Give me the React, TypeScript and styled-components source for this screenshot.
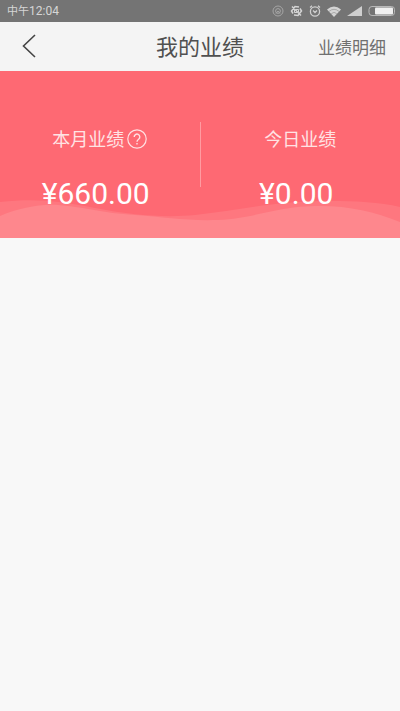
import React from 'react';
import styled, { createGlobalStyle } from 'styled-components';

const GlobalStyle = createGlobalStyle`
  * { box-sizing: border-box; }
  body {
    margin: 0;
    background: #f8f8f8;
    font-family: Roboto, "Noto Sans CJK SC", sans-serif;
  }
`;

const Page = styled.div`
  display: flex;
  flex-direction: column;
  min-height: 100vh;
`;

const StatusBar = styled.div`
  display: flex;
  align-items: center;
  justify-content: space-between;
  height: 22px;
  padding: 0 5px 0 7px;
  background: #747474;
  color: #d6d6d6;
`;

const Clock = styled.time`
  font-size: 12px;
  line-height: 22px;
`;

const Meridiem = styled.span`
  font-size: 11px;
`;

const StatusIcons = styled.div`
  display: flex;
  align-items: center;
  gap: 6px;

  svg { display: block; }
`;

const Header = styled.header`
  display: grid;
  grid-template-columns: 1fr auto 1fr;
  align-items: center;
  height: 49px;
  padding: 0 14px;
  background: #f4f4f4;
`;

const BackButton = styled.button`
  display: flex;
  justify-self: start;
  padding: 0 6px 2px;
  border: 0;
  background: none;
  cursor: pointer;
`;

const Title = styled.h1`
  margin: 0;
  padding-top: 2px;
  color: #505050;
  font-size: 22px;
  font-weight: 400;
  line-height: 32px;
`;

const DetailLink = styled.a`
  justify-self: end;
  padding-top: 2px;
  color: #707070;
  font-size: 17px;
  line-height: 24px;
  text-decoration: none;
  white-space: nowrap;
`;

const Summary = styled.section`
  position: relative;
  display: grid;
  grid-template-columns: 1fr 1px 1fr;
  align-items: start;
  padding: 51px 0 26px;
  background: #fe6973;
  color: #fff;
`;

const Waves = styled.svg`
  position: absolute;
  left: 0;
  bottom: 0;
  width: 100%;
  height: 40px;
`;

const Divider = styled.div`
  height: 65px;
  background: #ff9ba1;
`;

const Metric = styled.div`
  position: relative;
  display: flex;
  flex-direction: column;
  align-items: center;
  gap: 22px;
  padding-top: 4px;
`;

const MetricLabel = styled.div`
  display: flex;
  align-items: center;
  gap: 3px;
  color: #ffe3e4;
  font-size: 18px;
  line-height: 28px;
`;

const HelpButton = styled.button`
  display: flex;
  padding: 0 0 2px;
  border: 0;
  background: none;
  cursor: pointer;
`;

const Amount = styled.strong`
  padding-right: 8px;
  font-size: 30px;
  font-weight: 400;
  line-height: 36px;
`;

function StatusGlyphs() {
  return (
    <StatusIcons aria-hidden="true">
      <svg width="12" height="12" viewBox="0 0 12 12" fill="none" stroke="#a6a6a6">
        <circle cx="6" cy="6" r="5" />
        <circle cx="6" cy="6" r="2.4" />
        <path d="M4 8.5 6 6l2 2.5" />
      </svg>
      <svg width="13" height="12" viewBox="0 0 13 12" fill="none" stroke="#d4d4d4" strokeWidth="1.5">
        <path d="M3 8.500 1.500 6 5 1.500 9 2M10 3.500 11.500 6 8 10.500 4 10M2 1.500l9 9" />
        <path d="M4.500 5v2.500H7M6 4.500h2.500V7" strokeWidth="1" />
      </svg>
      <svg width="12" height="12" viewBox="0 0 12 12" fill="none" stroke="#d0d0d0" strokeWidth="1.3">
        <circle cx="6" cy="6.5" r="4.6" />
        <path d="M1 2.500 3 .8M11 2.500 9 .8M4 5.500l2 2 2-2" />
      </svg>
      <svg width="14" height="11" viewBox="0 0 14 11">
        <path d="M0 3.600Q7-2.600 14 3.600L7 11Z" fill="#d4d4d4" />
        <path d="M2 5.400Q7 1.200 12 5.400M4.300 7.600Q7 5.200 9.700 7.600" fill="none" stroke="#8b8b8b" strokeWidth=".6" />
      </svg>
      <svg width="15" height="10" viewBox="0 0 15 10">
        <path d="M0 10 15 0v10Z" fill="#cfcfcf" />
      </svg>
      <svg width="27" height="10" viewBox="0 0 27 10">
        <rect x="1" y=".5" width="25.5" height="9" rx="3" fill="none" stroke="#b8b8b8" />
        <rect x="7" y="1.5" width="18" height="7" rx="1" fill="#f0f0f0" />
      </svg>
    </StatusIcons>
  );
}

export default function App() {
  return (
    <Page>
      <GlobalStyle />
      <StatusBar>
        <Clock dateTime="12:04"><Meridiem>中午</Meridiem>12:04</Clock>
        <StatusGlyphs />
      </StatusBar>
      <Header>
        <BackButton type="button" aria-label="返回">
          <svg width="18" height="24" viewBox="0 0 18 24" fill="none" stroke="#444" strokeWidth="1.6">
            <path d="M15 1 3.5 12 15 23" />
          </svg>
        </BackButton>
        <Title>我的业绩</Title>
        <DetailLink href="#details">业绩明细</DetailLink>
      </Header>
      <main>
        <Summary>
          <Waves viewBox="0 0 400 40" preserveAspectRatio="none" aria-hidden="true">
            <path d="M0 4C35 0 60 3 95 10C130 17 165 20 195 17C240 12 275 3 330 3C355 3 380 4 400 9V40H0Z" fill="#fe777f" />
            <path d="M0 18C20 10 38 6 58 7C85 9 102 15 135 17C165 19 185 23 218 22C258 20 275 8 320 8C350 8 375 14 400 24V40H0Z" fill="#fe878d" />
          </Waves>
          <Metric>
            <MetricLabel>
              <span>本月业绩</span>
              <HelpButton type="button" aria-label="业绩说明">
                <svg width="20" height="20" viewBox="0 0 20 20" fill="none" stroke="#ffe0e2" strokeWidth="1.2">
                  <circle cx="10" cy="10" r="9.2" />
                  <path d="M7.200 8a2.800 2.800 0 1 1 4.400 2.200C10.500 11 10 11.500 10 12.700M10 14v1.500" strokeWidth="1.4" />
                </svg>
              </HelpButton>
            </MetricLabel>
            <Amount>¥660.00</Amount>
          </Metric>
          <Divider />
          <Metric>
            <MetricLabel>今日业绩</MetricLabel>
            <Amount>¥0.00</Amount>
          </Metric>
        </Summary>
      </main>
    </Page>
  );
}
